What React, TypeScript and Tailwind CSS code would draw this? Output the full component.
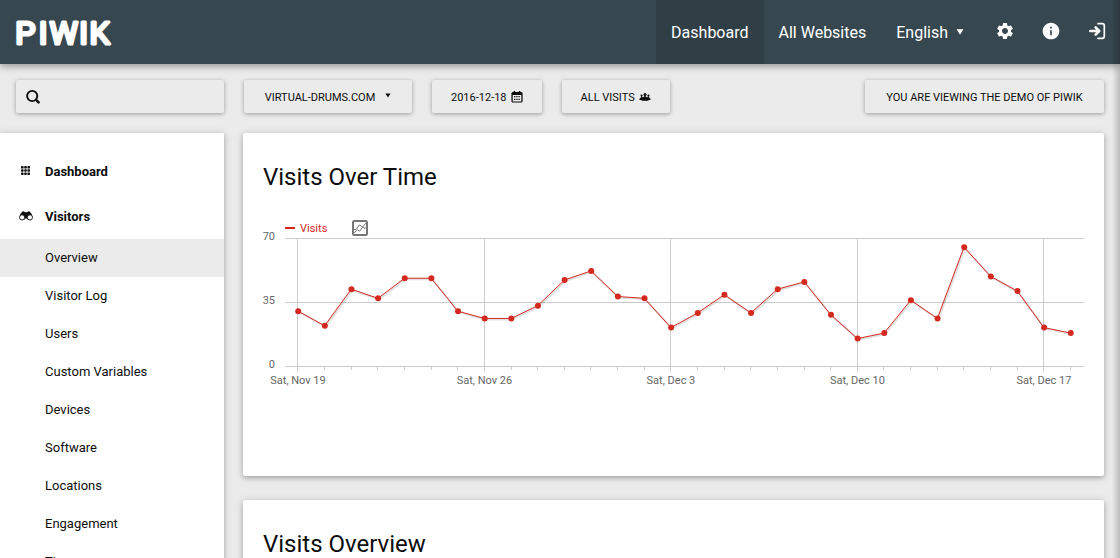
import type { ReactNode } from "react";
import { MdInfo, MdSettings } from "react-icons/md";

const visits = [
  30, 22, 42, 37, 48, 48, 30, 26, 26, 33, 47, 52, 38, 37, 21, 29, 39, 29, 42,
  46, 28, 15, 18, 36, 26, 65, 49, 41, 21, 18,
];

const dateLabels = ["Sat, Nov 19", "Sat, Nov 26", "Sat, Dec 3", "Sat, Dec 10", "Sat, Dec 17"];

const visitorPages = [
  "Overview",
  "Visitor Log",
  "Users",
  "Custom Variables",
  "Devices",
  "Software",
  "Locations",
  "Engagement",
  "Times",
];

const raised = "shadow-[0_2px_4px_rgba(0,0,0,0.2),0_1px_8px_rgba(0,0,0,0.16)]";
const controlRaised = "shadow-[0_1px_4px_rgba(0,0,0,0.35)]";

function Caret({ className }: { className: string }) {
  return (
    <svg viewBox="0 0 8 6" className={className} fill="currentColor" aria-hidden="true">
      <path d="M0.6 0.3h6.8L4 5.8z" />
    </svg>
  );
}

function SearchIcon() {
  return (
    <svg viewBox="0 0 16 16" className="size-4 shrink-0" fill="none" stroke="currentColor" aria-hidden="true">
      <circle cx="7.2" cy="7" r="5.1" strokeWidth="1.9" />
      <path d="M11.4 11.2l2.200 2.200" strokeWidth="2.600" strokeLinecap="round" />
    </svg>
  );
}

function SignInIcon() {
  return (
    <svg viewBox="0 0 18 18" className="size-[18px]" fill="none" stroke="currentColor" aria-hidden="true">
      <path d="M10 1.700h4.300q2 0 2 2v10.600q0 2-2 2H10" strokeWidth="1.700" strokeLinecap="round" />
      <path d="M2.300 9h8M7.600 5.400L11.200 9l-3.600 3.600" strokeWidth="2.600" strokeLinecap="round" strokeLinejoin="round" />
    </svg>
  );
}

function CalendarIcon() {
  return (
    <svg viewBox="0 0 12 12" className="size-3" aria-hidden="true">
      <path
        fill="currentColor"
        fillRule="evenodd"
        d="M2 1h.6V0h1.6v1h3.6V0h1.6v1h.6q1.6 0 1.6 1.6v7.4q0 1.6-1.6 1.6H2Q.4 11.600.4 10V2.600Q.4 1 2 1zM1.700 3.900v6q0 .5.5.5h7.600q.5 0 .5-.5v-6z"
      />
      <path fill="currentColor" d="M5.300 5h1.300v1.300H5.300zM7.500 5h1.300v1.300H7.500zM3.100 5h1.300v1.300H3.100zM3.100 7.800h1.300v1.300H3.100zM5.300 7.800h1.300v1.300H5.300zM7.500 7.800h1.300v1.300H7.500z" />
    </svg>
  );
}

function UsersIcon() {
  return (
    <svg viewBox="0 0 12 10" className="h-[10px] w-3" fill="currentColor" aria-hidden="true">
      <circle cx="6" cy="2.500" r="1.500" />
      <circle cx="2.600" cy="3.500" r="1.100" />
      <circle cx="9.400" cy="3.500" r="1.100" />
      <path d="M5.200 3.500h1.600v2H5.200zM2 4.300h1.200v1.500H2zM8.800 4.300H10v1.500H8.800z" />
      <path d="M.4 8Q.4 5.300 3 5.200 6 4.300 9 5.200q2.600.1 2.600 2.800H9.500v.8h-7V8z" />
    </svg>
  );
}

function GridIcon() {
  return (
    <svg viewBox="0 0 10 10" className="size-[10px]" fill="currentColor" aria-hidden="true">
      {[0, 3.2, 6.4].map((y) =>
        [0, 3.2, 6.4].map((x) => <rect key={`${x}-${y}`} x={x} y={y} width="2.600" height="2.600" rx="0.7" />),
      )}
    </svg>
  );
}

function BinocularsIcon() {
  return (
    <svg viewBox="0 0 14 10" className="h-[10px] w-[14px]" aria-hidden="true">
      <path fill="currentColor" d="M.6 5.500Q1.300 2 2.800 1.200 3.600.2 5 .4l1 .9h2l1-.9q1.400-.2 2.200.8 1.500.8 2.200 4.300L9 9 7.800 7.500H6.200L5 9z" />
      <circle cx="3.100" cy="6.400" r="2.600" fill="white" stroke="currentColor" strokeWidth="0.900" />
      <circle cx="10.900" cy="6.400" r="2.600" fill="white" stroke="currentColor" strokeWidth="0.900" />
    </svg>
  );
}

function Logo() {
  return (
    <a href="#home" aria-label="Piwik" className="pl-3 text-white">
      <svg viewBox="-4 0 104 36" className="h-9 w-[104px] overflow-visible">
        <text
          x="-0.8 22.7 33.5 63.3 73.6"
          y="30.3"
          fontFamily="Roboto, sans-serif"
          fontSize="32"
          fill="currentColor"
          stroke="currentColor"
          strokeWidth="3.1"
          strokeLinejoin="round"
        >
          PIWIK
        </text>
      </svg>
    </a>
  );
}

function VisitsChart() {
  const x = (i: number) => 35 + i * 26.64;
  const y = (v: number) => 153 - (v * 128) / 70;
  const points = visits.map((v, i) => `${x(i)},${y(v)}`).join(" ");
  return (
    <svg
      viewBox="0 0 821 183"
      className="mt-5 w-full font-[Roboto,sans-serif] text-[11px]"
      role="img"
      aria-label="Visits over time"
    >
      <g stroke="#cccccc" strokeWidth="1" shapeRendering="crispEdges">
        {[25.5, 89.5, 153.5].map((gy) => (
          <line key={gy} x1="22" x2="821" y1={gy} y2={gy} />
        ))}
        {visits.map((_, i) => {
          const gx = Math.floor(x(i) - 0.1) + 0.5;
          return <line key={i} x1={gx} x2={gx} y1={i % 7 === 0 ? 25 : 153} y2={i % 7 === 0 ? 159 : 157} />;
        })}
      </g>
      <g fill="#666666">
        <text x="12" y="27" textAnchor="end">70</text>
        <text x="12" y="91" textAnchor="end">35</text>
        <text x="12" y="155" textAnchor="end">0</text>
        {dateLabels.map((label, i) => (
          <text key={label} x={x(i * 7)} y="171" textAnchor="middle">
            {label}
          </text>
        ))}
      </g>
      <polyline points={points} transform="translate(1 1)" fill="none" stroke="#000000" strokeOpacity="0.12" strokeWidth="2" />
      <polyline points={points} fill="none" stroke="#d4291f" strokeWidth="1" />
      <g fill="#d4291f">
        {visits.map((v, i) => (
          <circle key={i} cx={x(i) + 0.2} cy={y(v)} r="3" />
        ))}
        <rect x="22" y="14" width="10" height="2" />
        <text x="37" y="19">Visits</text>
      </g>
      <g fill="none" stroke="#777777">
        <rect x="90" y="8" width="14" height="14" rx="1.500" strokeWidth="2" />
        <path d="M91 16.500h2l3.500-4.500 3 2 4-4.500" />
        <path d="M91 19.800l3.500-3 2 1.500 3.500-4.300 2 1.500 1.500-1.500" />
      </g>
    </svg>
  );
}

function ControlButton({ label, icon, className = "" }: { label: string; icon?: ReactNode; className?: string }) {
  return (
    <button
      type="button"
      className={`flex h-[33px] items-center justify-center gap-1 rounded-xs bg-[#ebebeb] px-[19px] text-[11px] leading-4 whitespace-nowrap uppercase ${controlRaised} ${className}`}
    >
      <span className="pt-[2px]">{label}</span>
      {icon}
    </button>
  );
}

function Card({ title, children }: { title: string; children?: ReactNode }) {
  return (
    <section className={`rounded-xs bg-white px-5 pt-7 pb-20 ${raised}`}>
      <h2 className="text-2xl leading-8">{title}</h2>
      {children}
    </section>
  );
}

export default function App() {
  return (
    <div className="flex min-h-screen flex-col bg-[#ebebeb] font-[Roboto,sans-serif] text-[#0d0d0d]">
      <header className="relative z-10 flex h-16 items-center justify-between bg-[#37474f] shadow-[0_2px_8px_rgba(0,0,0,0.4)]">
        <Logo />
        <nav className="flex h-full text-base text-white">
          <a href="#dashboard" className="flex items-center bg-[#303f46] px-[15px] pt-[2px]">Dashboard</a>
          <a href="#websites" className="flex items-center px-[15px] pt-[2px]">All Websites</a>
          <button type="button" className="flex items-center gap-2 pr-[18px] pl-[15px]">
            <span className="pt-[2px]">English</span>
            <Caret className="h-[6px] w-2" />
          </button>
          <a href="#settings" aria-label="Settings" className="flex w-[46px] items-center justify-center pb-[2px]">
            <MdSettings className="size-5" />
          </a>
          <a href="#help" aria-label="Help" className="flex w-[46px] items-center justify-center pb-[2px]">
            <MdInfo className="size-5" />
          </a>
          <a href="#login" aria-label="Sign in" className="flex w-[46px] items-center justify-center pb-[2px]">
            <SignInIcon />
          </a>
        </nav>
      </header>

      <div className="flex gap-5 px-4 pt-4 pb-5">
        <label className={`flex h-[33px] w-52 shrink-0 items-center rounded-xs px-[9px] ${controlRaised}`}>
          <SearchIcon />
          <input type="search" aria-label="Search" className="min-w-0 flex-1 px-2 text-[11px] outline-none" />
        </label>
        <ControlButton label="Virtual-drums.com" icon={<Caret className="mb-[2px] ml-[6px] h-[5px] w-[6px]" />} className="min-w-[168px]" />
        <ControlButton label="2016-12-18" icon={<CalendarIcon />} />
        <ControlButton label="All visits" icon={<UsersIcon />} />
        <ControlButton label="You are viewing the demo of Piwik" className="ml-auto min-w-[239px]" />
      </div>

      <div className="flex flex-1 items-stretch">
        <aside className={`w-56 shrink-0 bg-white pt-4 text-[13px] ${raised}`}>
          <a href="#dashboard" className="flex h-[45px] items-center font-bold">
            <span className="flex w-[45px] pb-[2px] pl-[21px]"><GridIcon /></span>
            Dashboard
          </a>
          <a href="#visitors" className="flex h-[45px] items-center font-bold">
            <span className="flex w-[45px] pb-[2px] pl-[19px]"><BinocularsIcon /></span>
            Visitors
          </a>
          <ul>
            {visitorPages.map((page, i) => (
              <li key={page}>
                <a href={`#page-${i}`} className={`flex h-[38px] items-center pl-[45px] ${i === 0 ? "bg-[#ebebeb]" : ""}`}>
                  {page}
                </a>
              </li>
            ))}
          </ul>
        </aside>
        <main className="flex min-w-0 flex-1 flex-col gap-6 pr-4 pl-[19px]">
          <Card title="Visits Over Time">
            <VisitsChart />
          </Card>
          <Card title="Visits Overview" />
        </main>
      </div>

      <div className="pointer-events-none fixed inset-y-0 right-0 z-20 w-2 bg-linear-to-l from-black/20 to-transparent" />
    </div>
  );
}
